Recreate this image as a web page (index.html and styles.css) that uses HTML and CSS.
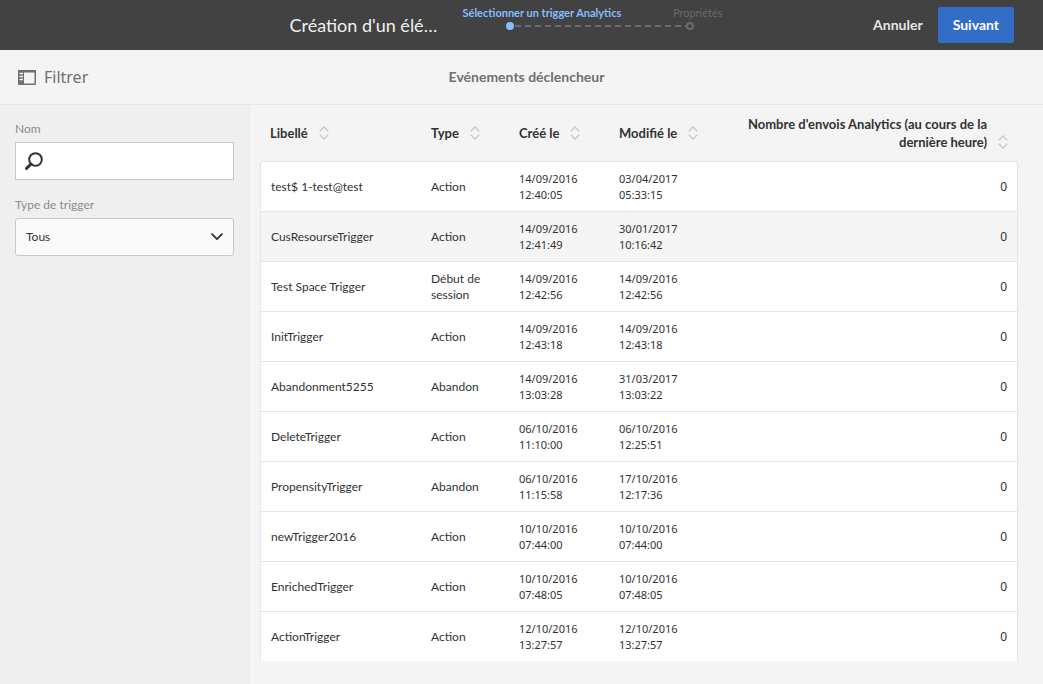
FILE: index.html
```html
<!DOCTYPE html>
<html lang="fr">
<head>
<meta charset="utf-8">
<meta name="viewport" content="width=device-width, initial-scale=1">
<title>Création d'un élément</title>
<link rel="stylesheet" href="styles.css">
</head>
<body>
<svg class="defs" aria-hidden="true">
  <symbol id="sort" viewBox="0 0 10 14"><path d="M.8 5.2 5 1l4.200 4.200M.8 8.800 5 13l4.200-4.200" fill="none" stroke="currentColor" stroke-width="1.300"/></symbol>
</svg>
<header class="topbar">
  <h1 class="topbar-title">Création d'un élé…</h1>
  <div class="wizard">
    <ol class="steps">
      <li class="step step-active" aria-current="step">Sélectionner un trigger Analytics</li>
      <li class="step">Propriétés</li>
    </ol>
    <div class="track" aria-hidden="true">
      <span class="dot dot-active"></span><span class="line"></span><span class="dot"></span>
    </div>
  </div>
  <div class="actions">
    <button class="btn" type="button">Annuler</button>
    <button class="btn btn-primary" type="button">Suivant</button>
  </div>
</header>
<div class="subbar">
  <button class="filter-toggle" type="button">
    <svg width="18" height="15" viewBox="0 0 18 15" aria-hidden="true"><rect x=".75" y=".75" width="16.500" height="13.500" rx=".5" fill="none" stroke="currentColor" stroke-width="1.500"/><path d="M0 0h18v2.500H0zM0 2h6v13H0z" fill="currentColor"/><path d="M1.500 3.500H5M1.500 6.500H5M1.500 9.500H5" stroke="#f4f4f4" stroke-width="1.300"/></svg>
    Filtrer
  </button>
  <h2 class="subbar-title">Evénements déclencheur</h2>
</div>
<div class="content">
  <aside class="filters">
    <div class="field">
      <label for="name">Nom</label>
      <div class="control">
        <input id="name" type="text">
        <svg class="search-icon" width="18" height="18" viewBox="0 0 18 18" aria-hidden="true"><circle cx="10.500" cy="7.500" r="6.300" fill="none" stroke="currentColor" stroke-width="2"/><path d="m6 12-4.500 4.500" stroke="currentColor" stroke-width="3" stroke-linecap="round"/></svg>
      </div>
    </div>
    <div class="field">
      <label for="type">Type de trigger</label>
      <div class="control">
        <select id="type"><option>Tous</option></select>
        <svg class="chevron" width="12" height="8" viewBox="0 0 12 8" aria-hidden="true"><path d="m1 1.200 5 5 5-5" fill="none" stroke="currentColor" stroke-width="1.800" stroke-linecap="round" stroke-linejoin="round"/></svg>
      </div>
    </div>
  </aside>
  <main class="results">
    <table class="table">
      <colgroup><col class="col-label"><col class="col-type"><col class="col-date"><col class="col-date"><col></colgroup>
      <thead>
        <tr>
          <th scope="col"><button class="sort" type="button">Libellé <svg><use href="#sort"/></svg></button></th>
          <th scope="col"><button class="sort" type="button">Type <svg><use href="#sort"/></svg></button></th>
          <th scope="col"><button class="sort" type="button">Créé le <svg><use href="#sort"/></svg></button></th>
          <th scope="col"><button class="sort" type="button">Modifié le <svg><use href="#sort"/></svg></button></th>
          <th scope="col"><button class="sort sort-end" type="button"><span>Nombre d'envois Analytics (au cours de la dernière heure)</span> <svg><use href="#sort"/></svg></button></th>
        </tr>
      </thead>
      <tbody>
        <tr><td>test$ 1-test@test</td><td>Action</td><td>14/09/2016 12:40:05</td><td>03/04/2017 05:33:15</td><td>0</td></tr>
        <tr class="hovered"><td>CusResourseTrigger</td><td>Action</td><td>14/09/2016 12:41:49</td><td>30/01/2017 10:16:42</td><td>0</td></tr>
        <tr><td>Test Space Trigger</td><td>Début de session</td><td>14/09/2016 12:42:56</td><td>14/09/2016 12:42:56</td><td>0</td></tr>
        <tr><td>InitTrigger</td><td>Action</td><td>14/09/2016 12:43:18</td><td>14/09/2016 12:43:18</td><td>0</td></tr>
        <tr><td>Abandonment5255</td><td>Abandon</td><td>14/09/2016 13:03:28</td><td>31/03/2017 13:03:22</td><td>0</td></tr>
        <tr><td>DeleteTrigger</td><td>Action</td><td>06/10/2016 11:10:00</td><td>06/10/2016 12:25:51</td><td>0</td></tr>
        <tr><td>PropensityTrigger</td><td>Abandon</td><td>06/10/2016 11:15:58</td><td>17/10/2016 12:17:36</td><td>0</td></tr>
        <tr><td>newTrigger2016</td><td>Action</td><td>10/10/2016 07:44:00</td><td>10/10/2016 07:44:00</td><td>0</td></tr>
        <tr><td>EnrichedTrigger</td><td>Action</td><td>10/10/2016 07:48:05</td><td>10/10/2016 07:48:05</td><td>0</td></tr>
        <tr><td>ActionTrigger</td><td>Action</td><td>12/10/2016 13:27:57</td><td>12/10/2016 13:27:57</td><td>0</td></tr>
      </tbody>
    </table>
  </main>
</div>
</body>
</html>
```
FILE: styles.css
```css
* { box-sizing: border-box; }
body {
  margin: 0;
  min-height: 100vh;
  display: flex;
  flex-direction: column;
  background: #f4f4f4;
  color: #323232;
  font: 12px/16px Lato, "Open Sans", sans-serif;
}
button, input, select { font: inherit; color: inherit; }
button { border: 0; background: none; padding: 0; cursor: pointer; }
.defs { position: absolute; width: 0; height: 0; }

.topbar {
  display: flex;
  align-items: center;
  height: 50px;
  padding: 0 29px 0 calc(50% - 232px);
  background: #424242;
}
.topbar-title {
  margin: 0;
  width: 173px;
  color: #f0f0f0;
  font-size: 18px;
  font-weight: 400;
  line-height: 24px;
  white-space: nowrap;
}
.wizard { align-self: flex-start; padding-top: 5px; }
.steps {
  display: flex;
  justify-content: space-between;
  width: 260px;
  margin: 0;
  padding: 0;
  list-style: none;
  font-size: 11px;
  white-space: nowrap;
}
.step { color: #6b6b6b; }
.step-active { color: #86bdff; font-weight: 700; }
.track { display: flex; align-items: center; width: 188px; margin: 1px 0 0 43px; }
.dot { width: 8px; height: 8px; border: 2px solid #6b6b6b; border-radius: 50%; }
.dot-active { border-color: #86bdff; background: #86bdff; }
.line {
  flex: 1;
  height: 2px;
  margin-left: 1px;
  background: repeating-linear-gradient(90deg, #6b6b6b 0 6px, transparent 6px 10px);
}
.actions { display: flex; align-items: center; margin-left: auto; }
.btn {
  height: 36px;
  padding: 0 15px;
  border-radius: 2px;
  color: #e6e6e6;
  font-size: 14px;
  font-weight: 700;
}
.btn-primary { background: #326ec8; color: #fff; }

.subbar {
  display: grid;
  grid-template-columns: 1fr auto 1fr;
  align-items: center;
  height: 55px;
  padding: 0 8px 0 18px;
  border-bottom: 1px solid #e6e6e6;
  color: #707070;
}
.filter-toggle {
  display: flex;
  align-items: center;
  gap: 8px;
  font: 16px/24px "Noto Sans", sans-serif;
}
.subbar-title { margin: 0; font-size: 14px; font-weight: 700; }

.content { display: flex; flex: 1; }
.filters {
  flex: 0 0 250px;
  display: flex;
  flex-direction: column;
  gap: 17px;
  padding: 16px 15px;
  border-right: 1px solid #e6e6e6;
  background: #efefef;
}
.field { display: flex; flex-direction: column; gap: 5px; }
.field label { color: #8c8c8c; }
.control { position: relative; display: flex; }
.control input, .control select {
  width: 100%;
  height: 38px;
  border: 1px solid #c8c8c8;
  background: #fff;
}
.control input { padding: 0 10px 0 36px; border-radius: 0; }
.control select { appearance: none; padding: 0 30px 0 10px; border-radius: 3px; background: #fafafa; }
.search-icon { position: absolute; left: 10px; top: 10px; pointer-events: none; }
.chevron { position: absolute; right: 11px; top: 15px; pointer-events: none; }

.results { flex: 1; min-width: 0; padding: 0 25px 23px 10px; }
.table { width: 100%; table-layout: fixed; border-collapse: separate; border-spacing: 0; }
.col-label { width: 161px; }
.col-type { width: 88px; }
.col-date { width: 100px; }
th { height: 56px; padding: 0 10px; text-align: left; }
.sort {
  display: flex;
  align-items: center;
  gap: 11px;
  font-size: 13px;
  font-weight: 700;
  line-height: 18px;
  white-space: nowrap;
}
.sort svg { flex: none; width: 10px; height: 14px; color: #c8c8c8; }
.sort-end { align-items: flex-end; margin-left: auto; text-align: right; white-space: normal; }
.sort-end svg { margin-bottom: 2px; }
td { height: 50px; padding: 0 10px; border-top: 1px solid #e6e6e6; background: #fff; }
td:nth-child(n+3) { font-family: "Noto Sans", sans-serif; }
td:nth-child(3), td:nth-child(4) { padding-right: 20px; font-size: 11px; }
td:first-child { border-left: 1px solid #e6e6e6; }
td:last-child { border-right: 1px solid #e6e6e6; text-align: right; }
tbody tr:first-child td:first-child { border-top-left-radius: 3px; }
tbody tr:first-child td:last-child { border-top-right-radius: 3px; }
.hovered td { background: #f5f5f5; }
```
